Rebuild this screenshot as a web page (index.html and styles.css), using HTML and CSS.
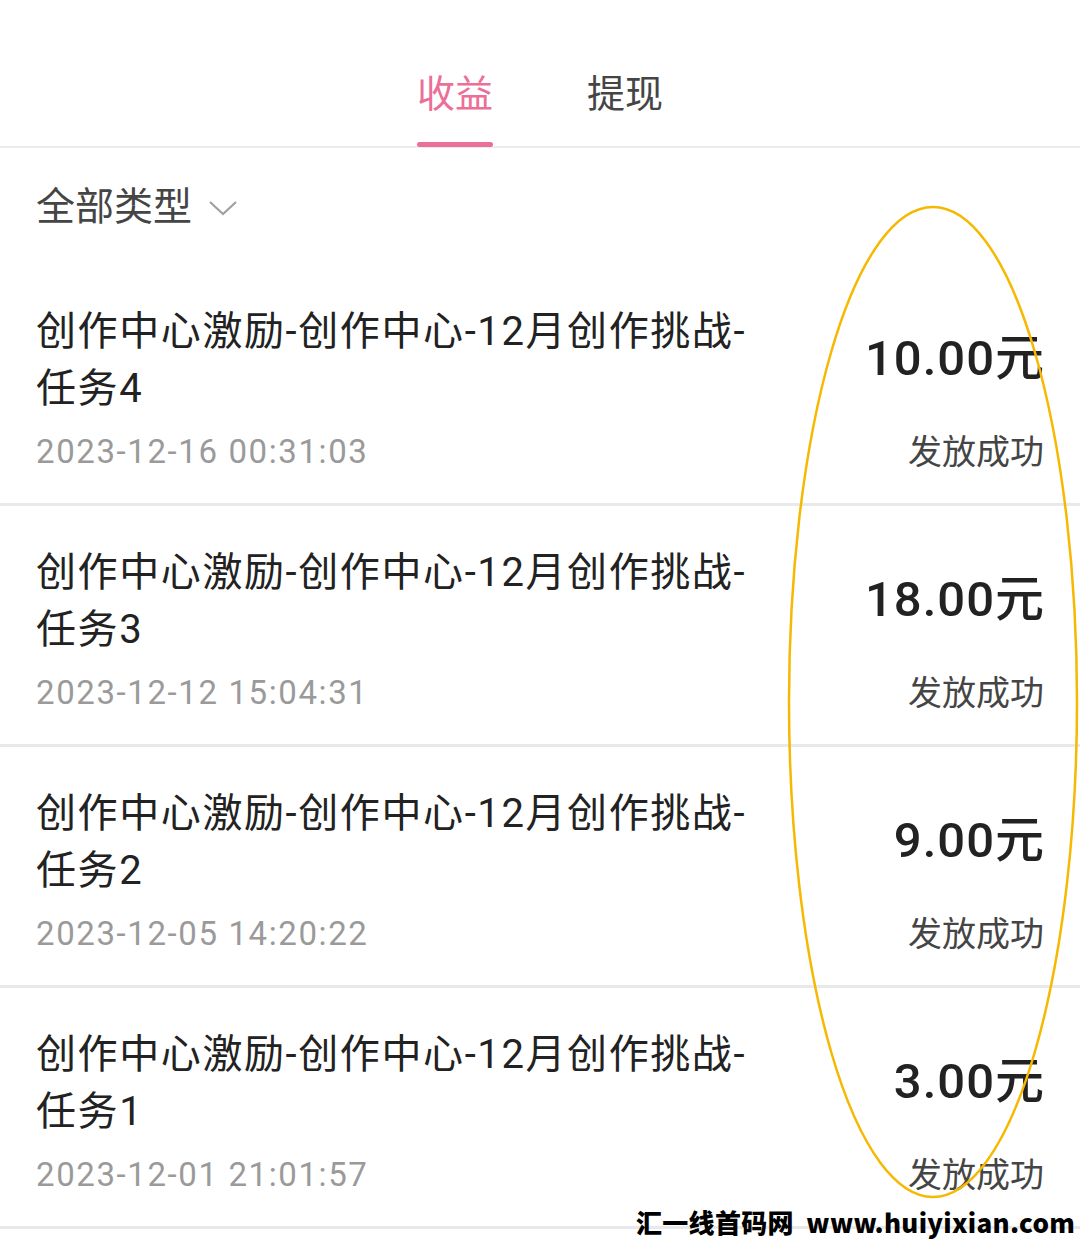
FILE: index.html
```html
<!DOCTYPE html>
<html lang="zh-CN">
<head>
    <meta charset="UTF-8">
    <meta name="viewport" content="width=device-width, initial-scale=1.0">
    <title>收益明细</title>
    <link rel="stylesheet" href="styles.css">
</head>
<body>
    <div class="page">
        <div class="tabs">
            <div class="tab active">收益</div>
            <div class="tab">提现</div>
        </div>

        <div class="filter">
            <span>全部类型</span>
            <svg class="chevron" width="30" height="18" viewBox="0 0 30 18">
                <polyline points="2,3 15,15 28,3" fill="none" stroke="#a0a0a0" stroke-width="2.2" />
            </svg>
        </div>

        <div class="list">
            <div class="item">
                <div class="info">
                    <div class="title">创作中心激励-创作中心-12月创作挑战-任务4</div>
                    <div class="date">2023-12-16 00:31:03</div>
                </div>
                <div class="money">
                    <div class="amount">10.00元</div>
                    <div class="status">发放成功</div>
                </div>
            </div>
            <div class="item">
                <div class="info">
                    <div class="title">创作中心激励-创作中心-12月创作挑战-任务3</div>
                    <div class="date">2023-12-12 15:04:31</div>
                </div>
                <div class="money">
                    <div class="amount">18.00元</div>
                    <div class="status">发放成功</div>
                </div>
            </div>
            <div class="item">
                <div class="info">
                    <div class="title">创作中心激励-创作中心-12月创作挑战-任务2</div>
                    <div class="date">2023-12-05 14:20:22</div>
                </div>
                <div class="money">
                    <div class="amount">9.00元</div>
                    <div class="status">发放成功</div>
                </div>
            </div>
            <div class="item">
                <div class="info">
                    <div class="title">创作中心激励-创作中心-12月创作挑战-任务1</div>
                    <div class="date">2023-12-01 21:01:57</div>
                </div>
                <div class="money">
                    <div class="amount">3.00元</div>
                    <div class="status">发放成功</div>
                </div>
            </div>
        </div>

        <!-- annotation drawn over the amounts -->
        <svg class="mark" width="292" height="994" viewBox="0 0 292 994">
            <ellipse cx="146" cy="497" rx="144" ry="495" fill="none" stroke="#f6b800" stroke-width="2.5" />
        </svg>

        <div class="watermark">汇一线首码网&nbsp;&nbsp;www.huiyixian.com</div>
    </div>
</body>
</html>
```

FILE: styles.css
```css
body {
    margin: 0;
    background: #fff;
    font-family: Roboto, 'Noto Sans CJK SC', sans-serif;
    color: #222;
}

.page {
    position: relative;
    width: 1080px;
    min-height: 1240px;
    overflow: hidden;
}

.tabs {
    height: 146px;
    display: flex;
    justify-content: center;
    align-items: flex-end;
    gap: 94px;
    border-bottom: 2px solid #ececec;
}

.tab {
    position: relative;
    font-size: 38px;
    line-height: 50px;
    padding-bottom: 27px;
    color: #454545;
}

.tab.active {
    color: #ec6f98;
}

.tab.active::after {
    content: '';
    position: absolute;
    left: 0;
    right: 0;
    bottom: -1px;
    height: 5px;
    border-radius: 3px;
    background: #ec6f98;
}

.filter {
    display: flex;
    align-items: center;
    gap: 16px;
    padding: 34px 36px 33px;
    font-size: 39px;
    line-height: 50px;
    color: #454545;
}

.chevron {
    margin-top: 2px;
}

.item {
    display: flex;
    justify-content: space-between;
    padding: 38px 36px 31px;
    border-bottom: 3px solid #e9e9e9;
}

.info {
    width: 720px;
}

.title {
    font-size: 40px;
    line-height: 57px;
    letter-spacing: 1.6px;
    color: #222;
}

.date {
    margin-top: 15px;
    font-size: 33px;
    line-height: 40px;
    letter-spacing: 1.6px;
    color: #9a9a9a;
}

.money {
    display: flex;
    flex-direction: column;
    align-items: flex-end;
    padding-top: 26px;
}

.amount {
    font-size: 49px;
    line-height: 60px;
    font-weight: 500;
    letter-spacing: 1px;
    margin-right: -1px;
    color: #222;
}

.status {
    margin-top: 43px;
    font-size: 34px;
    line-height: 40px;
    color: #454545;
}

.mark {
    position: absolute;
    left: 787px;
    top: 205px;
}

.watermark {
    position: absolute;
    left: 636px;
    top: 1204px;
    font-family: 'Noto Sans CJK SC', sans-serif;
    font-size: 26px;
    font-weight: 900;
    letter-spacing: 0.3px;
    color: #000;
    line-height: 36px;
    white-space: nowrap;
}
```
